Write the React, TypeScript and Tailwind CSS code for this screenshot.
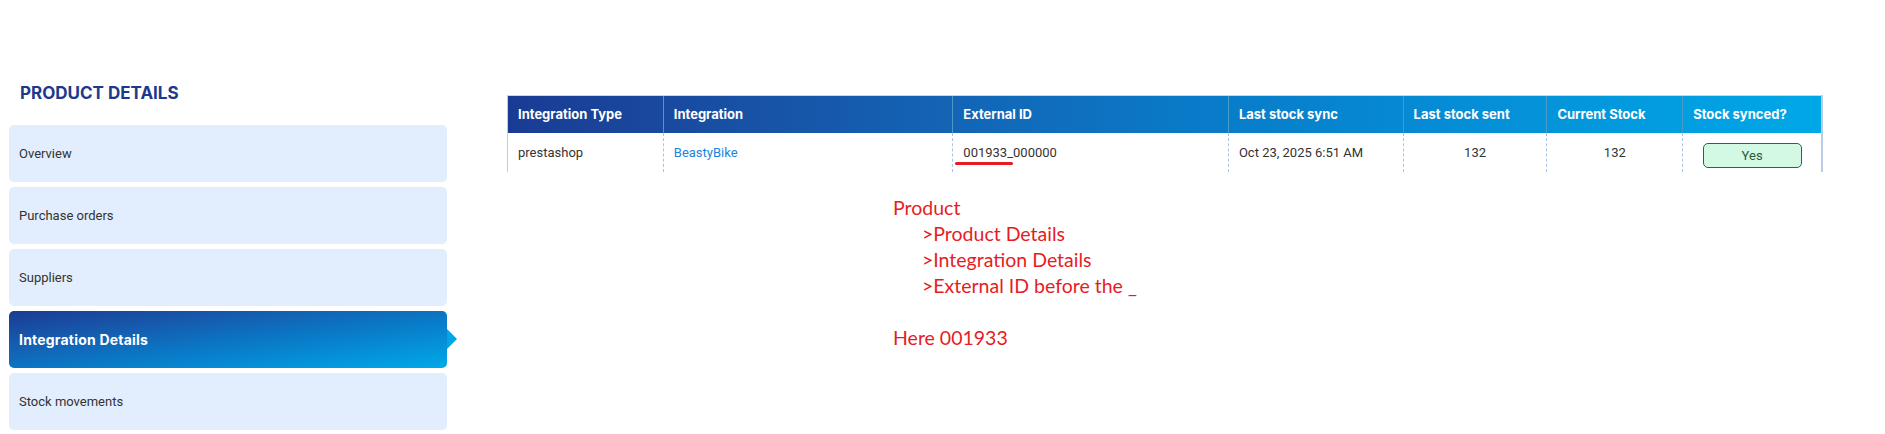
const navItems = [
  "Overview",
  "Purchase orders",
  "Suppliers",
  "Integration Details",
  "Stock movements",
];

const columns = [
  { label: "Integration Type", width: "w-[155px]" },
  { label: "Integration", width: "w-[290px]" },
  { label: "External ID", width: "w-[276px]" },
  { label: "Last stock sync", width: "w-[175px]" },
  { label: "Last stock sent", width: "w-[144px]" },
  { label: "Current Stock", width: "w-[136px]" },
  { label: "Stock synced?", width: "w-[139px]" },
];

function Sidebar() {
  return (
    <div className="w-[447px] shrink-0 pl-[9px] pt-[81px]">
      <h2 className="mb-[20px] ml-[11px] h-[24px] font-['Inter',sans-serif] text-[17px] font-bold uppercase leading-[24px] text-[#1c3a8c]">
        Product Details
      </h2>
      <nav className="flex flex-col gap-[5px]">
        {navItems.map((item) => {
          const active = item === "Integration Details";
          if (active) {
            return (
              <div key={item} className="relative">
                <div className="flex h-[57px] items-center rounded-[5px] bg-gradient-to-br from-[#1a3b93] via-[#0b73c2] to-[#00a9e9] pl-[10px] font-['Inter',sans-serif] text-[14px] font-bold tracking-[0.2px] text-white">
                  {item}
                </div>
                <div className="absolute right-[-10px] top-[18px] h-0 w-0 border-y-[10px] border-l-[10px] border-y-transparent border-l-[#01a4e5]" />
              </div>
            );
          }
          return (
            <div
              key={item}
              className="flex h-[57px] items-center rounded-[5px] bg-[#e2eefd] pl-[10px] font-['Roboto',sans-serif] text-[13px] text-[#333]"
            >
              {item}
            </div>
          );
        })}
      </nav>
    </div>
  );
}

function IntegrationTable() {
  return (
    <div className="w-[1316px] border-t border-t-[#cfd6df] border-l border-l-[#b9cde5] border-r-2 border-r-[#b9cde5]">
      <div className="flex h-[37px] bg-gradient-to-r from-[#1a3b93] via-[#0a78c6] to-[#00a8e8] font-['Inter',sans-serif] text-[13px] font-bold text-white">
        {columns.map((col, i) => (
          <div
            key={col.label}
            className={`${col.width} flex items-center px-[10px] ${i > 0 ? "border-l border-l-[#4a9ac8]" : ""}`}
          >
            {col.label}
          </div>
        ))}
      </div>
      <div className="flex h-[39px] font-['Roboto',sans-serif] text-[13px] text-[#333]">
        <div className="flex w-[155px] items-center px-[10px]">prestashop</div>
        <div className="flex w-[290px] items-center border-l border-dashed border-l-[#a9c3e6] px-[10px] text-[#1a84e0]">
          BeastyBike
        </div>
        <div className="relative flex w-[276px] items-center border-l border-dashed border-l-[#a9c3e6] px-[10px]">
          001933_000000
          <span className="absolute left-[2px] top-[29px] h-[3px] w-[58px] rounded-full bg-[#e61c24]" />
        </div>
        <div className="flex w-[175px] items-center border-l border-dashed border-l-[#a9c3e6] px-[10px]">
          Oct 23, 2025 6:51 AM
        </div>
        <div className="flex w-[144px] items-center justify-center border-l border-dashed border-l-[#a9c3e6]">
          132
        </div>
        <div className="flex w-[136px] items-center justify-center border-l border-dashed border-l-[#a9c3e6]">
          132
        </div>
        <div className="flex w-[139px] items-start justify-center border-l border-dashed border-l-[#a9c3e6] pt-[10px]">
          <span className="flex h-[25px] w-[99px] items-center justify-center rounded-[5px] border border-[#1d6b4a] bg-[#d3f8e3] text-[#2b5a45]">
            Yes
          </span>
        </div>
      </div>
    </div>
  );
}

function Note() {
  return (
    <div className="ml-[386px] mt-[23px] font-['Lato',sans-serif] text-[19.5px] leading-[26px] text-[#e61c24]">
      <p>Product</p>
      <p className="pl-[29px]">&gt;Product Details</p>
      <p className="pl-[29px]">&gt;Integration Details</p>
      <p className="pl-[29px]">&gt;External ID before the _</p>
      <p className="h-[26px]" />
      <p>Here 001933</p>
    </div>
  );
}

export default function App() {
  return (
    <div className="flex h-[434px] w-[1885px] items-start bg-white">
      <Sidebar />
      <div className="ml-[60px] pt-[95px]">
        <IntegrationTable />
        <Note />
      </div>
    </div>
  );
}
